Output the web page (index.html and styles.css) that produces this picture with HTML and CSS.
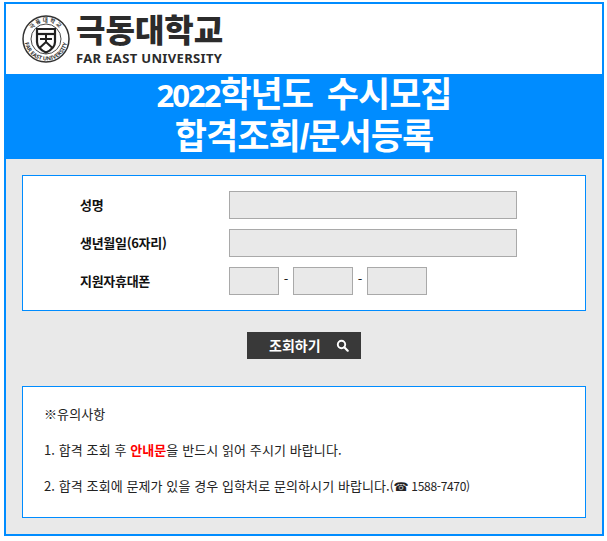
FILE: index.html
```html
<!DOCTYPE html>
<html lang="ko">
<head>
    <meta charset="UTF-8">
    <meta name="viewport" content="width=device-width, initial-scale=1.0">
    <title>2022학년도 수시모집 합격조회/문서등록</title>
    <link rel="stylesheet" href="styles.css">
</head>
<body>
    <div class="frame">
        <div class="top">
            <svg class="seal" width="48" height="48" viewBox="0 0 48 48">
                <defs>
                    <path id="arcTop" d="M7 24a17 17 0 0 1 34 0"/>
                    <path id="arcBottom" d="M2.5 24a21.5 21.5 0 0 0 43 0"/>
                </defs>
                <circle cx="24" cy="24" r="23" fill="none" stroke="#333" stroke-width="1.5"/>
                <circle cx="24" cy="24" r="15" fill="none" stroke="#333" stroke-width="0.9"/>
                <text class="seal-top"><textPath href="#arcTop" startOffset="50%" text-anchor="middle">극동대학교</textPath></text>
                <text class="seal-bottom"><textPath href="#arcBottom" startOffset="50%" text-anchor="middle">FAR EAST UNIVERSITY</textPath></text>
                <path d="M15 14h18v13c0 6-4.5 8.5-9 10.5-4.5-2-9-4.5-9-10.5z" fill="#fff" stroke="#222" stroke-width="2.2"/>
                <path d="M15 19h18" stroke="#222" stroke-width="2.2"/>
                <path d="M24 19v8M18 24h12M24 27l-6.5 6M24 27l6.5 6" fill="none" stroke="#222" stroke-width="2"/>
            </svg>
            <div class="logo-text">
                <div class="logo-ko">극동대학교</div>
                <div class="logo-en">FAR EAST UNIVERSITY</div>
            </div>
        </div>
        <h1 class="banner"><span class="year">2022</span>학년도 수시모집<br>합격조회/문서등록</h1>
        <div class="content">
            <div class="box form">
                <label class="field-label">성명</label>
                <input class="field" type="text">
                <label class="field-label">생년월일(6자리)</label>
                <input class="field" type="text">
                <label class="field-label">지원자휴대폰</label>
                <div class="phone">
                    <input class="field tel-first" type="text">
                    <span class="dash">-</span>
                    <input class="field tel-rest" type="text">
                    <span class="dash">-</span>
                    <input class="field tel-rest" type="text">
                </div>
            </div>
            <button class="search-btn" type="button">
                <span>조회하기</span>
                <svg width="13" height="13" viewBox="0 0 13 13">
                    <circle cx="5.5" cy="5.5" r="3.7" fill="none" stroke="#fff" stroke-width="1.9"/>
                    <path d="M8.3 8.3l3.4 3.4" stroke="#fff" stroke-width="2.2" stroke-linecap="round"/>
                </svg>
            </button>
            <div class="box notice">
                <p>※유의사항</p>
                <p>1. 합격 조회 후 <strong>안내문</strong>을 반드시 읽어 주시기 바랍니다.</p>
                <p>2. 합격 조회에 문제가 있을 경우 입학처로 문의하시기 바랍니다.<span class="tel">(<span class="tel-icon">☎</span> 1588-7470)</span></p>
            </div>
        </div>
    </div>
</body>
</html>
```

FILE: styles.css
```css
body {
    margin: 2px 0 0 4px;
    font-family: "Noto Sans CJK KR", "Noto Sans", sans-serif;
    color: #222;
    background-color: #fff;
}
.frame {
    width: 596px;
    border: 2px solid #008cff;
}
.top {
    display: flex;
    align-items: center;
    gap: 6px;
    height: 70px;
    padding-left: 16px;
    box-sizing: border-box;
    background-color: #fff;
}
.seal {
    display: block;
}
.seal-top {
    font-size: 5.5px;
    font-weight: 700;
    letter-spacing: 1.5px;
    fill: #333;
}
.seal-bottom {
    font-family: "Noto Sans", sans-serif;
    font-size: 5.5px;
    font-weight: 700;
    fill: #333;
}
.logo-text {
    width: 150px;
}
.logo-ko {
    font-family: "Liberation Sans", "Noto Sans CJK KR", sans-serif;
    font-size: 32px;
    font-weight: 900;
    line-height: 37px;
    color: #2b2b2b;
}
.logo-en {
    font-family: "Noto Sans", sans-serif;
    font-size: 13px;
    font-weight: 700;
    line-height: 16px;
    letter-spacing: 0.35px;
    color: #2b2b2b;
    white-space: nowrap;
}
.banner {
    margin: 0;
    height: 85px;
    font-family: "Liberation Sans", "Noto Sans CJK KR", sans-serif;
    font-size: 35px;
    font-weight: 700;
    line-height: 41px;
    letter-spacing: -1px;
    word-spacing: 5px;
    text-align: center;
    color: #fff;
    background-color: #008cff;
}
.year {
    font-family: "Noto Sans", sans-serif;
    font-size: 31px;
    letter-spacing: -2px;
}
.content {
    padding: 16px;
    background-color: #e9e9e9;
}
.box {
    border: 1px solid #008cff;
    background-color: #fff;
}
.form {
    display: grid;
    grid-template-columns: 149px 1fr;
    row-gap: 10px;
    align-items: center;
    padding: 15px 0 15px 57px;
}
.field-label {
    padding-bottom: 2px;
    font-size: 13px;
    font-weight: 700;
    letter-spacing: -0.3px;
    color: #111;
}
.field {
    display: block;
    width: 288px;
    height: 28px;
    padding: 0;
    box-sizing: border-box;
    border: 1px solid #a9a9a9;
    background-color: #e9e9e9;
}
.phone {
    display: flex;
    align-items: center;
}
.tel-first {
    width: 50px;
}
.tel-rest {
    width: 60px;
}
.dash {
    width: 14px;
    padding-bottom: 5px;
    font-size: 13px;
    text-align: center;
}
.search-btn {
    display: flex;
    align-items: center;
    justify-content: space-between;
    width: 114px;
    height: 27px;
    margin: 21px auto 27px;
    padding: 0 12px 0 22px;
    border: none;
    font-family: inherit;
    font-size: 14px;
    font-weight: 700;
    color: #fff;
    background-color: #393939;
}
.search-btn span {
    padding-bottom: 2px;
}
.notice {
    height: 132px;
    box-sizing: border-box;
    padding: 18px 21px 0;
    font-size: 13px;
    line-height: 18px;
    letter-spacing: 0.09px;
}
.notice p {
    margin: 0 0 18px;
}
.notice strong {
    font-weight: 700;
    color: #f00;
}
.tel {
    font-size: 12px;
    letter-spacing: -0.3px;
}
.tel-icon {
    font-family: "DejaVu Sans", sans-serif;
}
```
